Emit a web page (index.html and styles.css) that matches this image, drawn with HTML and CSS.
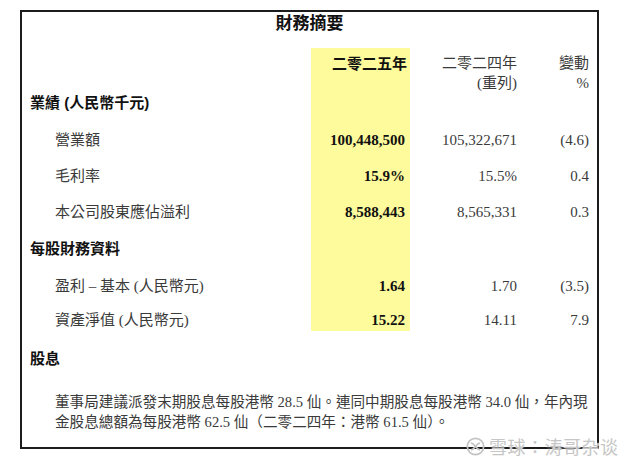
FILE: index.html
```html
<!DOCTYPE html>
<html lang="zh-Hant">
<head>
<meta charset="utf-8">
<title>財務摘要</title>
<link rel="stylesheet" href="styles.css">
</head>
<body>
<div class="page">
  <div class="box">
    <h1 class="title">財務摘要</h1>
    <div class="table">
      <div class="row r1">
        <div class="c0"></div>
        <div class="c1 hl">二零二五年</div>
        <div class="c2">二零二四年</div>
        <div class="c3">變動</div>
      </div>
      <div class="row r2">
        <div class="c0"></div>
        <div class="c1"></div>
        <div class="c2">(重列)</div>
        <div class="c3">%</div>
      </div>
      <div class="row r3">
        <div class="c0 section">業績 (人民幣千元)</div>
        <div class="c1"></div>
        <div class="c2"></div>
        <div class="c3"></div>
      </div>
      <div class="row r4">
        <div class="c0 label">營業額</div>
        <div class="c1 num">100,448,500</div>
        <div class="c2">105,322,671</div>
        <div class="c3">(4.6)</div>
      </div>
      <div class="row r5">
        <div class="c0 label">毛利率</div>
        <div class="c1 num">15.9%</div>
        <div class="c2">15.5%</div>
        <div class="c3">0.4</div>
      </div>
      <div class="row r6">
        <div class="c0 label">本公司股東應佔溢利</div>
        <div class="c1 num">8,588,443</div>
        <div class="c2">8,565,331</div>
        <div class="c3">0.3</div>
      </div>
      <div class="row r7">
        <div class="c0 section">每股財務資料</div>
        <div class="c1"></div>
        <div class="c2"></div>
        <div class="c3"></div>
      </div>
      <div class="row r8">
        <div class="c0 label">盈利 – 基本 (人民幣元)</div>
        <div class="c1 num">1.64</div>
        <div class="c2">1.70</div>
        <div class="c3">(3.5)</div>
      </div>
      <div class="row r9">
        <div class="c0 label">資產淨值 (人民幣元)</div>
        <div class="c1 num">15.22</div>
        <div class="c2">14.11</div>
        <div class="c3">7.9</div>
      </div>
    </div>
    <div class="dividend">股息</div>
    <p class="para">董事局建議派發末期股息每股港幣 28.5 仙。連同中期股息每股港幣 34.0 仙，年內現<br>金股息總額為每股港幣 62.5 仙（二零二四年：港幣 61.5 仙）。</p>
  </div>
  <div class="watermark">
    <svg class="wm-logo" width="19" height="19" viewBox="0 0 20 20" aria-hidden="true">
      <circle cx="10" cy="10" r="8.6" fill="none" stroke="#c4c4c4" stroke-width="1.8"/>
      <path d="M5.2 6.5 C8 6.5 9 9 10 10 C11 11 12 13.5 14.8 13.5" fill="none" stroke="#c4c4c4" stroke-width="1.8"/>
      <path d="M14.8 6.5 C12 6.5 11 9 10 10 C9 11 8 13.5 5.2 13.5" fill="none" stroke="#c4c4c4" stroke-width="1.8"/>
    </svg>
    <span class="wm-text">雪球：涛哥杂谈</span>
  </div>
</div>
</body>
</html>
```

FILE: styles.css
```css
html, body {
  margin: 0;
  padding: 0;
  background: #ffffff;
}

.page {
  position: relative;
  width: 640px;
  height: 467px;
  padding: 10px 0 0 20px;
  box-sizing: border-box;
  font-family: "Liberation Serif", "Noto Sans CJK TC", serif;
  font-size: 15px;
  color: #333;
}

.box {
  width: 579px;
  height: 439px;
  box-sizing: border-box;
  border: 2px solid #1c1c1c;
}

.title {
  margin: 0;
  height: 20px;
  line-height: 20px;
  text-align: center;
  font-family: "Noto Sans CJK TC", sans-serif;
  font-weight: 700;
  font-size: 17px;
  color: #111;
}

.table {
  margin-top: 16px;
}

.row {
  display: grid;
  grid-template-columns: 289px 99px 107px 72px;
}

.row > div {
  display: flex;
  align-items: flex-end;
  justify-content: flex-end;
  line-height: 20px;
  white-space: nowrap;
}

.row > .c0 {
  justify-content: flex-start;
}

.row > .c1 {
  background: #fdfb9b;
  padding-right: 5px;
  font-weight: 700;
  color: #111;
}

.row > .c1.hl {
  padding-right: 3px;
  font-family: "Noto Sans CJK TC", sans-serif;
  font-weight: 700;
}

.c2, .c3 {
  color: #3a3a3a;
}

.r1 { height: 25px; }
.r2 { height: 20px; }
.r3 { height: 19px; }
.r4 { height: 38px; }
.r5 { height: 36px; }
.r6 { height: 36px; }
.r7 { height: 37px; }
.r8 { height: 37px; }
.r9 { height: 35px; }
.r9 > div { padding-bottom: 1px; }

.section {
  padding-left: 8px;
  font-family: "Liberation Sans", "Noto Sans CJK TC", sans-serif;
  font-weight: 700;
  color: #111;
}

.label {
  padding-left: 33px;
  color: #3a3a3a;
}

.dividend {
  margin-top: 17px;
  padding-left: 8px;
  line-height: 20px;
  font-family: "Noto Sans CJK TC", sans-serif;
  font-weight: 700;
  color: #111;
}

.para {
  margin: 24px 0 0;
  padding-left: 33px;
  line-height: 20px;
  font-size: 14.6px;
  white-space: nowrap;
  color: #3a3a3a;
}

.watermark {
  position: absolute;
  left: 466px;
  top: 436px;
  display: flex;
  align-items: center;
  gap: 4px;
}

.wm-logo {
  display: block;
}

.wm-text {
  font-family: "Noto Sans CJK SC", sans-serif;
  font-size: 18px;
  line-height: 20px;
  color: #c6c6c6;
  letter-spacing: 0.5px;
  text-shadow: 0 0 2px #fff, 0 0 1px #fff;
}
```
